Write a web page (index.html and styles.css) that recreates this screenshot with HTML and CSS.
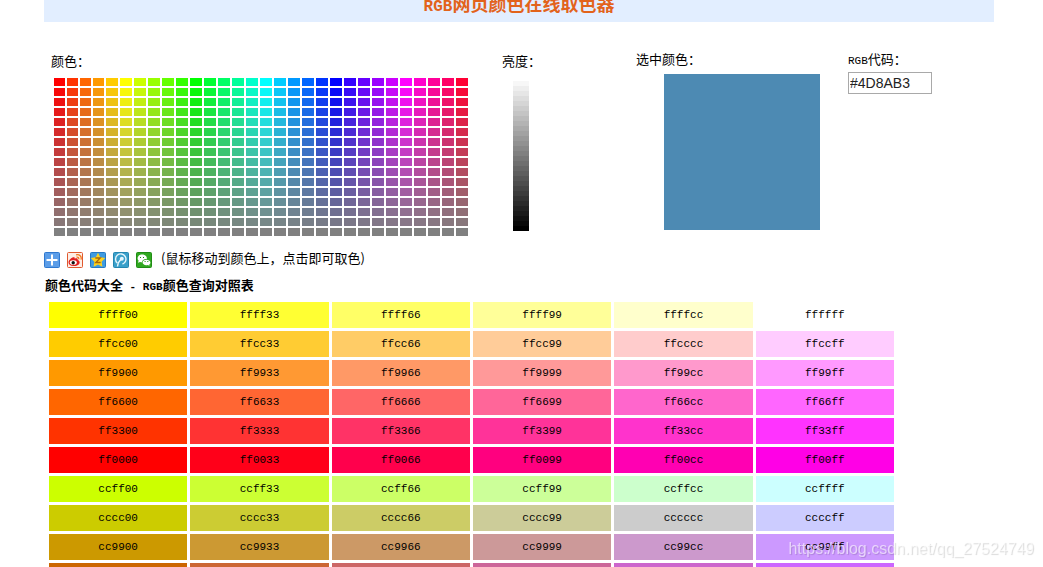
FILE: index.html
```
<!DOCTYPE html>
<html lang="zh-CN">
  <head>
    <meta charset="utf-8" />
    <title>RGB网页颜色在线取色器</title>
    <link rel="stylesheet" href="styles.css">
  </head>

  <body>
    <div id="wrapper">
      <h1><span class="latin">RGB</span>网页颜色在线取色器</h1>

      <div class="picker">
        <div class="picker-main">
          <p class="label">颜色：</p>
          <div id="palette" class="palette"></div>
        </div>
        <div class="picker-main">
          <p class="label">亮度：</p>
          <div id="shades" class="shades"></div>
        </div>
        <div>
          <p class="label">选中颜色：</p>
          <div id="selected" class="selected"></div>
        </div>
        <div>
          <label class="label" for="code"><span class="latin">RGB</span>代码：</label>
          <input id="code" class="code" type="text" value="#4D8AB3" />
        </div>
      </div>

      <div class="share">
        <a href="#" aria-label="分享">
          <svg width="16" height="16" viewBox="0 0 16 16">
            <rect x=".5" y=".5" width="15" height="15" rx="1" fill="#5b9de8" stroke="#2f78cf" />
            <path d="M8 2.500v11M2.500 8h11" stroke="#fff" stroke-width="2" />
          </svg>
        </a>
        <a href="#" aria-label="新浪微博">
          <svg width="16" height="16" viewBox="0 0 16 16">
            <rect x=".5" y=".5" width="15" height="15" rx="1" fill="#fdeee6" stroke="#e0592f" />
            <path d="M1.500 10.500c0-2.800 3.500-5.500 5.500-5.300 1 .1.800 1 .7 1.500 2-.8 3.500-.2 3 1.200 3.500 1 2.500 6.100-4 6.100-3.300 0-5.200-1.600-5.200-3.500z" fill="#e02020" />
            <ellipse cx="6.300" cy="10.500" rx="3.500" ry="2.300" fill="#fff" />
            <circle cx="6.200" cy="10.700" r="1.700" fill="#111" />
            <path d="M9 2.800c3.500-.8 6 1.500 5 4.800M9.500 5.200c1.500-.3 2.600.6 2.200 2.100" fill="none" stroke="#f07a1e" stroke-width="1.300" />
          </svg>
        </a>
        <a href="#" aria-label="QQ空间">
          <svg width="16" height="16" viewBox="0 0 16 16">
            <rect x=".5" y=".5" width="15" height="15" rx="1" fill="#3f9be0" stroke="#2478c4" />
            <path d="M8 .8l2.200 4.500 5 .8-3.600 3.600.8 5L8 12.400l-4.400 2.300.8-5L.8 6.100l5-.8z" fill="#ffd21c" />
            <path d="M5.300 6h5L5.800 10.500h4.900" fill="none" stroke="#a8680a" stroke-width="1.300" />
          </svg>
        </a>
        <a href="#" aria-label="腾讯微博">
          <svg width="16" height="16" viewBox="0 0 16 16">
            <rect x=".5" y=".5" width="15" height="15" rx="1" fill="#3aa0ca" stroke="#2586b0" />
            <path d="M4.300 11A5.200 5.200 0 1 1 9.500 12M4.500 14.500c.3-3.500 1.500-5.500 3.800-7.500" fill="none" stroke="#e8f6fc" stroke-width="1.400" />
            <circle cx="8.800" cy="6.800" r="2" fill="#e8f6fc" />
          </svg>
        </a>
        <a href="#" aria-label="微信">
          <svg width="16" height="16" viewBox="0 0 16 16">
            <rect x=".5" y=".5" width="15" height="15" rx="1" fill="#30a820" stroke="#218c14" />
            <path d="M2 10.800l.6-2.200C.4 6.200 2.300 2.500 6 2.500s5.300 2.600 4.800 4.500C7 7 5.800 9 6.200 10.200c-.8 0-1.600 0-2.200-.3z" fill="#fff" />
            <path d="M13.500 13.800l-1.700-.8c-3 .7-5.200-.7-5.200-2.700 0-3.500 7.600-3.700 7.800.2 0 1-.5 1.600-1.200 2.200z" fill="#fff" />
            <path d="M4 5.500h1M7 5.500h1M8.600 9.500h1M11.300 9.500h1" stroke="#218c14" />
          </svg>
        </a>
        <span class="tip">(鼠标移动到颜色上，点击即可取色)</span>
      </div>

      <h2>颜色代码大全<span class="latin"> - RGB</span>颜色查询对照表</h2>
      <table class="codes">
        <tbody id="codes"></tbody>
      </table>
    </div>
    <div class="watermark">https://blog.csdn.net/qq_27524749</div>
    <script src="picker.js"></script>
  </body>
</html>
```
FILE: styles.css
```
body {
  background-color: #fff;
  color: #000;
  font-family: "Liberation Mono", "Noto Sans CJK SC", monospace;
  font-size: 13px;
  line-height: 18px;
  margin: 0;
  padding: 0 5px 0 0;
}

#wrapper {
  max-width: 950px;
  margin: 0 auto;
}

h1 {
  background-color: #e2eeff;
  color: #e2631b;
  font-size: 18px;
  height: 32px;
  line-height: 32px;
  text-align: center;
  margin: -10px 0 0;
}

h1 .latin {
  font-size: 16px;
}

h2 {
  font-size: 13px;
  height: 18px;
  line-height: 18px;
  margin: 10px 0 3px 1px;
}

p {
  margin: 0;
}

.latin {
  font-size: 11px;
  white-space: pre;
}

.picker {
  display: grid;
  grid-template-columns: 451fr 134fr 212fr 146fr;
  padding: 29px 0 0 7px;
}

.picker-main {
  padding-top: 2px;
}

.label {
  display: block;
  height: 18px;
  line-height: 20px;
}

.palette {
  display: grid;
  grid-template-columns: repeat(4, 11px) repeat(26, 12px);
  grid-auto-rows: 8px;
  gap: 2px;
  margin: 7px 0 0 3px;
}

.palette button,
.shades button {
  display: block;
  border: 0;
  padding: 0;
  cursor: pointer;
}

.shades {
  width: 16px;
  margin: 10px 0 0 11px;
}

.shades button {
  width: 16px;
  height: 5px;
}

.selected {
  background-color: #4d8ab3;
  width: 156px;
  height: 156px;
  margin: 5px 0 0 28px;
}

.code {
  box-sizing: border-box;
  width: 84px;
  height: 22px;
  margin-top: 3px;
  padding: 1px;
  border: 1px solid #a9a9a9;
  color: #222;
  font-family: "Liberation Sans", Arial, sans-serif;
  font-size: 14px;
}

.share {
  display: flex;
  gap: 7px;
  padding-top: 12px;
  height: 20px;
}

.share a {
  height: 16px;
  margin-top: 4px;
}

.share svg {
  display: block;
}

.tip {
  margin-left: 2px;
  font-family: "Noto Sans CJK SC", sans-serif;
  line-height: 20px;
}

.codes {
  table-layout: fixed;
  width: 100%;
  max-width: 851px;
  margin-left: 2px;
  border-spacing: 3px;
}

.codes td {
  height: 26px;
  padding: 0;
  font-size: 11px;
  text-align: center;
}

.watermark {
  position: fixed;
  right: 9px;
  bottom: 8px;
  color: rgba(255, 255, 255, 0.6);
  font-family: "Liberation Sans", Arial, sans-serif;
  font-size: 16px;
  line-height: 20px;
  text-shadow: 1px 1px 1px rgba(0, 0, 0, 0.15);
}
```
FILE: picker.js
```
const palette = document.getElementById("palette");
const shades = document.getElementById("shades");
const codes = document.getElementById("codes");

function pick(color) {
  document.getElementById("selected").style.backgroundColor = color;
  document.getElementById("code").value = color.toUpperCase();
}

function toHex(rgb) {
  return "#" + rgb.map((v) => Math.round(v).toString(16).padStart(2, "0")).join("");
}

function addSwatch(parent, rgb) {
  const color = toHex(rgb);
  const button = document.createElement("button");
  button.type = "button";
  button.title = color;
  button.style.backgroundColor = color;
  button.onclick = () => pick(color);
  parent.appendChild(button);
}

// one channel of the hue wheel, 30 steps round
function channel(step) {
  const distance = Math.min(step, 30 - step);
  return Math.max(0, Math.min(255, (10 - distance) * 51));
}

for (let row = 0; row < 16; row++) {
  for (let col = 0; col < 30; col++) {
    const rgb = [col, (col + 20) % 30, (col + 10) % 30].map(channel);
    addSwatch(palette, rgb.map((v) => v + ((128 - v) * row) / 15));
  }
}

for (let i = 29; i >= 0; i--) {
  const v = (255 * i) / 30;
  addSwatch(shades, [v, v, v]);
}

const steps = ["00", "33", "66", "99", "cc", "ff"];
// the ff00xx row is painted a little darker than its codes
const shown = {
  ff0033: "ff0019",
  ff0066: "ff004c",
  ff0099: "ff007f",
  ff00cc: "ff00b2",
  ff00ff: "ff00e6",
};

for (const red of ["ff", "cc"]) {
  for (const green of [...steps].reverse()) {
    const tr = codes.insertRow();
    for (const blue of steps) {
      const code = red + green + blue;
      const td = tr.insertCell();
      td.textContent = code;
      td.style.backgroundColor = "#" + (shown[code] || code);
    }
  }
}
```
